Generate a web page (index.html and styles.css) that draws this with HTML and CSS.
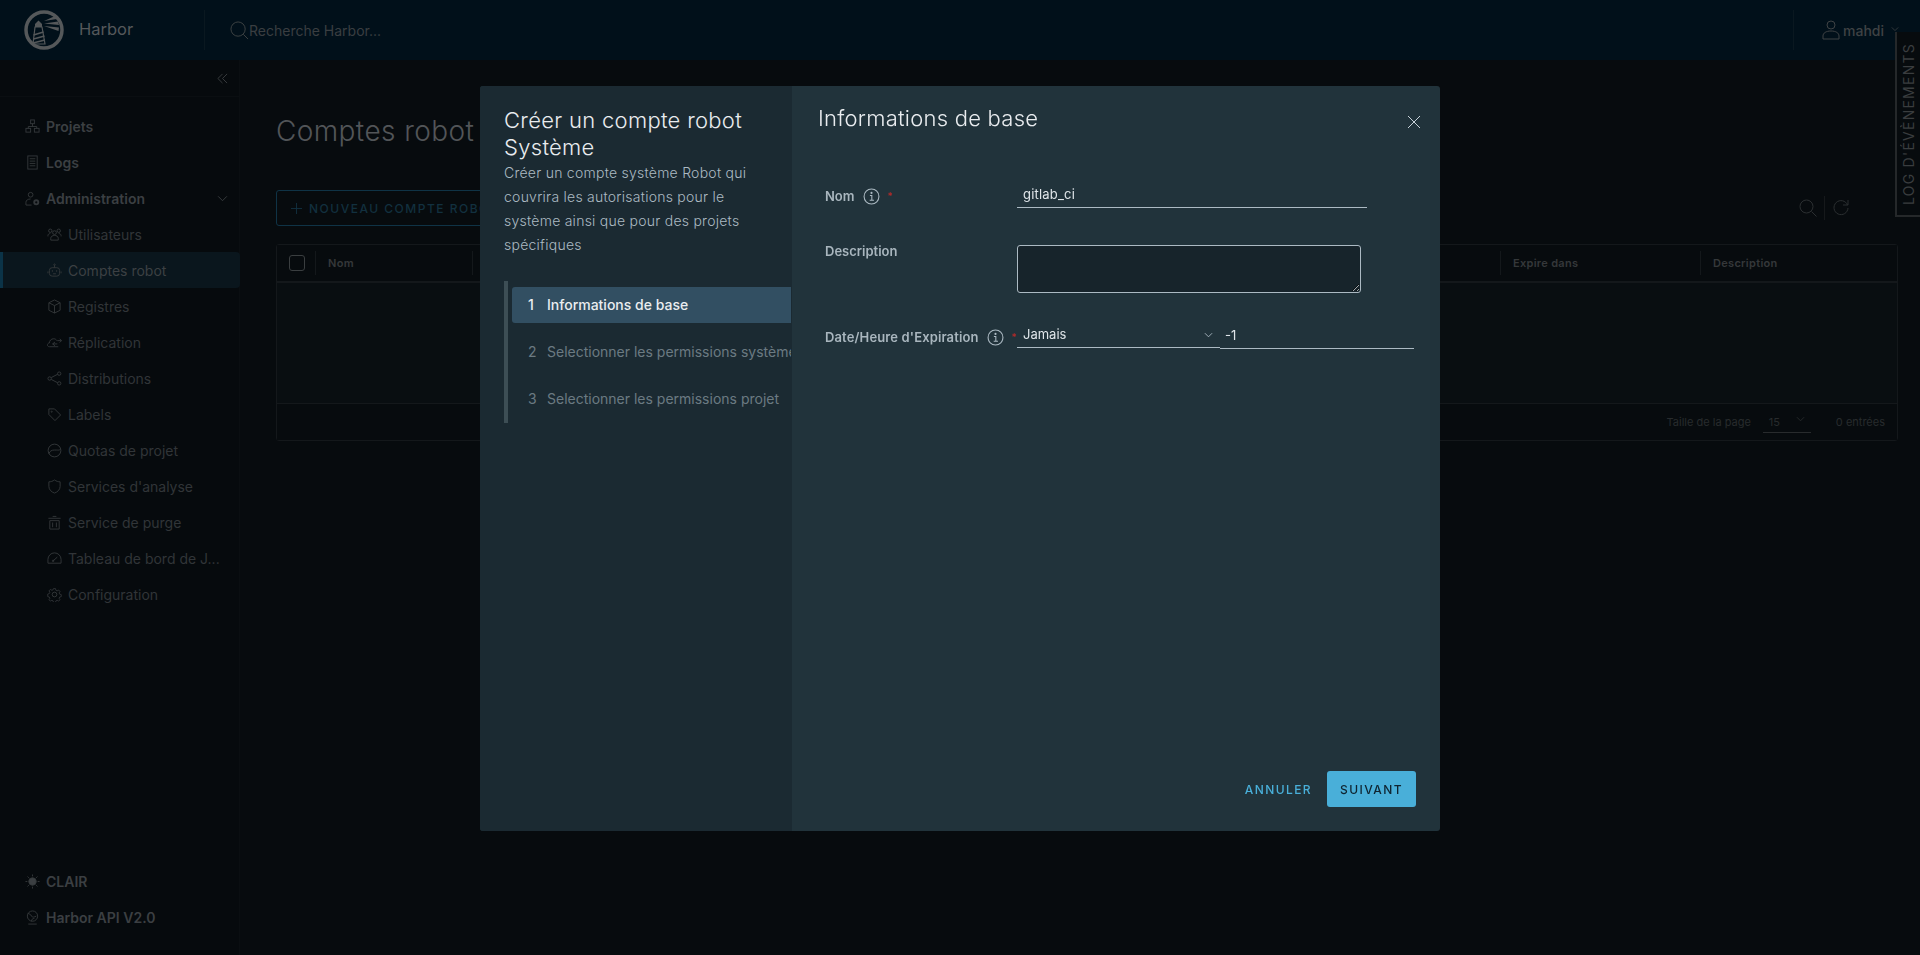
FILE: index.html
```html
<!DOCTYPE html>
<html lang="fr">
<head>
    <meta charset="UTF-8">
    <title>Harbor</title>
    <link rel="stylesheet" href="styles.css">
</head>
<body>
    <!-- Barre du haut -->
    <header class="top-bar">
        <div class="brand">
            <svg class="logo" viewBox="0 0 40 40">
                <circle cx="20" cy="20" r="18" fill="none" stroke="#55585a" stroke-width="3.5"/>
                <path d="M11 14l3.500-3.500 3.500 3.500v3h-7z" fill="#55585a"/>
                <path d="M11 17h7l3 17h-12z" fill="none" stroke="#55585a" stroke-width="1.200"/>
                <path d="M9.500 25l10-3M9.500 29l11-3M9 33l12-3" stroke="#55585a" stroke-width="1.500"/>
                <path d="M20 11l11-5 2 3zM20 13.500l14-2 1 3.500zM20 16l15 1.500-.5 3.500z" fill="#55585a"/>
            </svg>
            <span class="brand-name">Harbor</span>
        </div>
        <div class="search">
            <svg class="search-icon" viewBox="0 0 20 20"><circle cx="8.500" cy="8.500" r="7.500"/><path d="M14 14l5 5"/></svg>
            <span>Recherche Harbor...</span>
        </div>
        <div class="user">
            <svg class="user-icon" viewBox="0 0 18 20"><circle cx="9" cy="5" r="4"/><path d="M1 19v-3c0-3 3-5 8-5s8 2 8 5v3z"/></svg>
            <span>mahdi</span>
            <svg class="user-chevron" viewBox="0 0 10 6"><path d="M1 1l4 4 4-4"/></svg>
        </div>
    </header>

    <div class="log-tab"><span>LOG D'ÉVÈNEMENTS</span></div>

    <div class="main">
        <!-- Menu de gauche -->
        <nav class="sidebar">
            <div class="collapse">
                <svg viewBox="0 0 12 12"><path d="M6 1L1 6l5 5M11 1L6 6l5 5"/></svg>
            </div>
            <ul class="menu">
                <li class="menu-item top"><svg class="ico" viewBox="0 0 16 16"><rect x="6" y="1" width="4" height="4"/><rect x="1" y="10" width="5" height="4"/><rect x="10" y="10" width="5" height="4"/><path d="M8 5v3M3.500 10V8h9v2"/></svg>Projets</li>
                <li class="menu-item top"><svg class="ico" viewBox="0 0 16 16"><rect x="3" y="1" width="10" height="14"/><path d="M5 4h6M5 6.500h6M5 9h6M5 11.500h6"/></svg>Logs</li>
                <li class="menu-item top">
                    <svg class="ico" viewBox="0 0 16 16"><circle cx="6" cy="4" r="2.500"/><path d="M1 15v-3c0-2 2-3.500 5-3.500M1 15h6"/><circle cx="12" cy="12" r="2.200" stroke-width="2"/></svg>Administration
                    <svg class="menu-chevron" viewBox="0 0 12 8"><path d="M1 1.500l5 5 5-5"/></svg>
                </li>
                <li class="menu-item sub"><svg class="ico" viewBox="0 0 16 16"><circle cx="8" cy="6" r="2"/><circle cx="3.500" cy="4" r="1.800"/><circle cx="12.500" cy="4" r="1.800"/><path d="M4 14v-2c0-2 2-3 4-3s4 1 4 3v2zM1 10V9c0-1 1-2 2.500-2M15 10V9c0-1-1-2-2.500-2"/></svg>Utilisateurs</li>
                <li class="menu-item sub active"><svg class="ico" viewBox="0 0 16 16"><rect x="2.500" y="5" width="11" height="9" rx="3"/><path d="M8 5V2.500M1 9v2M15 9v2M6.500 11.500h3"/><circle cx="8" cy="1.800" r=".8"/><circle cx="5.700" cy="8.500" r=".4"/><circle cx="10.300" cy="8.500" r=".4"/></svg>Comptes robot</li>
                <li class="menu-item sub"><svg class="ico" viewBox="0 0 16 16"><path d="M8 1l6 3v8l-6 3-6-3V4zM2 4l6 3 6-3M8 7v8"/></svg>Registres</li>
                <li class="menu-item sub"><svg class="ico" viewBox="0 0 16 16"><path d="M12 12.500H2.500C1 12.500 .5 11.500 .5 10.500s.8-2 2-2c.2-2.500 2-4.500 4.500-4.500 1.500 0 2.800.7 3.500 2M6 9.500h5M8.500 7.500l-2.500 2 2.500 2M11 6h4.500M13.500 4l2 2-2 2"/></svg>Réplication</li>
                <li class="menu-item sub"><svg class="ico" viewBox="0 0 16 16"><circle cx="2.800" cy="8" r="1.800"/><circle cx="13" cy="2.800" r="1.800"/><circle cx="13" cy="13.200" r="1.800"/><path d="M4.500 7l6.800-3.500M4.500 9l6.800 3.500"/></svg>Distributions</li>
                <li class="menu-item sub"><svg class="ico" viewBox="0 0 16 16"><path d="M2 2h6l6.500 6.500-6 6L2 8z"/><circle cx="5" cy="5" r=".6"/></svg>Labels</li>
                <li class="menu-item sub"><svg class="ico" viewBox="0 0 16 16"><circle cx="8" cy="8" r="6.800"/><path d="M2 11.500C3 8.500 5 7.500 8 7.500h2c2 0 3 .5 4.500-1"/></svg>Quotas de projet</li>
                <li class="menu-item sub"><svg class="ico" viewBox="0 0 16 16"><path d="M8 1c2 1.500 4 2 6 2v5c0 3.500-3 6-6 7-3-1-6-3.500-6-7V3c2 0 4-.5 6-2z"/></svg>Services d'analyse</li>
                <li class="menu-item sub"><svg class="ico" viewBox="0 0 16 16"><path d="M1.500 3.500h13M3 6h10v9H3zM6 1.500h4M6 8v5M10 8v5"/></svg>Service de purge</li>
                <li class="menu-item sub"><svg class="ico" viewBox="0 0 16 16"><path d="M1 13V9a7 7 0 0 1 14 0v4zM6.500 10.500L11 6.500"/><circle cx="6.500" cy="10.500" r=".8"/></svg>Tableau de bord de J...</li>
                <li class="menu-item sub"><svg class="ico" viewBox="0 0 16 16"><circle cx="8" cy="8" r="2.500"/><path d="M6.800 1h2.400l.4 2 1.500.7 1.800-1 1.600 1.700-1 1.700.6 1.500 1.900.5v2.400l-1.900.5-.6 1.500 1 1.700-1.600 1.700-1.800-1-1.500.7-.4 2H6.800l-.4-2-1.500-.7-1.800 1-1.600-1.700 1-1.700-.6-1.500-1.900-.5V7.400l1.900-.5.6-1.500-1-1.700 1.600-1.700 1.800 1 1.500-.7z" transform="translate(.8 .8) scale(.9)"/></svg>Configuration</li>
            </ul>
            <ul class="menu menu-bottom">
                <li class="menu-item top"><svg class="ico" viewBox="0 0 16 16"><circle cx="8" cy="8" r="4" fill="#3b3f42"/><path d="M8 .500v2M8 13.500v2M.500 8h2M13.500 8h2M2.700 2.700l1.400 1.400M11.900 11.900l1.400 1.400M2.700 13.300l1.400-1.400M11.900 4.100l1.400-1.400"/></svg>CLAIR</li>
                <li class="menu-item top"><svg class="ico" viewBox="0 0 16 16"><circle cx="8" cy="6.500" r="5.500"/><path d="M3 3.500c2 1 3 1 4 3s3 1 5 0M7 12c0-2 1-3 3-3M3.500 15h9"/></svg>Harbor API V2.0</li>
            </ul>
        </nav>

        <!-- Contenu derrière la fenêtre -->
        <section class="content">
            <h1 class="page-title">Comptes robot</h1>
            <div class="toolbar">
                <button class="new-btn"><svg viewBox="0 0 12 12"><path d="M6 0v12M0 6h12"/></svg>NOUVEAU COMPTE ROBOT</button>
                <div class="tools">
                    <svg viewBox="0 0 18 18"><circle cx="7.500" cy="7.500" r="6.500"/><path d="M12.500 12.500l5 5"/></svg>
                    <span class="tools-sep"></span>
                    <svg viewBox="0 0 18 18"><path d="M15.500 6A7 7 0 1 0 16 9M16 1v5h-5"/></svg>
                </div>
            </div>
            <div class="table">
                <div class="table-head">
                    <div class="cell cell-check"><span class="checkbox"></span></div>
                    <div class="cell cell-name">Nom</div>
                    <div class="cell cell-rest"></div>
                    <div class="cell cell-expire">Expire dans</div>
                    <div class="cell cell-desc">Description</div>
                </div>
                <div class="table-body"></div>
                <div class="table-foot">
                    <span>Taille de la page</span>
                    <span class="page-size">15<svg viewBox="0 0 10 6"><path d="M1 1l4 4 4-4"/></svg></span>
                    <span class="entries">0 entrées</span>
                </div>
            </div>
        </section>
    </div>

    <!-- Fenêtre de création -->
    <div class="overlay">
        <div class="wizard">
            <aside class="wizard-nav">
                <h2 class="wizard-title">Créer un compte robot Système</h2>
                <p class="wizard-desc">Créer un compte système Robot qui couvrira les autorisations pour le système ainsi que pour des projets spécifiques</p>
                <ol class="steps">
                    <li class="step current"><span class="step-num">1</span>Informations de base</li>
                    <li class="step"><span class="step-num">2</span>Selectionner les permissions système</li>
                    <li class="step"><span class="step-num">3</span>Selectionner les permissions projet</li>
                </ol>
            </aside>
            <div class="wizard-pane">
                <div class="pane-head">
                    <h3 class="pane-title">Informations de base</h3>
                    <svg class="close" viewBox="0 0 14 14"><path d="M1 1l12 12M13 1L1 13"/></svg>
                </div>
                <form class="form">
                    <div class="row row-name">
                        <div class="label">Nom<svg class="info" viewBox="0 0 16 16"><circle cx="8" cy="8" r="7"/><path d="M6.500 7H8.300v4.500M6.300 11.500h4"/><circle cx="8" cy="4.600" r=".5"/></svg><span class="star">*</span></div>
                        <div class="field field-name">gitlab_ci</div>
                    </div>
                    <div class="row row-desc">
                        <div class="label label-desc">Description</div>
                        <textarea class="area"></textarea>
                    </div>
                    <div class="row row-date">
                        <div class="label label-date">Date/Heure d'Expiration<svg class="info" viewBox="0 0 16 16"><circle cx="8" cy="8" r="7"/><path d="M6.500 7H8.300v4.500M6.300 11.500h4"/><circle cx="8" cy="4.600" r=".5"/></svg><span class="star">*</span></div>
                        <div class="field field-select">Jamais<svg viewBox="0 0 10 6"><path d="M1 1l4 4 4-4"/></svg></div>
                        <div class="field field-num">-1</div>
                    </div>
                </form>
                <div class="pane-foot">
                    <button type="button" class="btn-flat">ANNULER</button>
                    <button type="button" class="btn-primary">SUIVANT</button>
                </div>
            </div>
        </div>
    </div>
</body>
</html>
```

FILE: styles.css
```css
* {
    box-sizing: border-box;
}

html, body {
    height: 100%;
}

body {
    margin: 0;
    font-family: 'Inter', 'Liberation Sans', sans-serif;
    background-color: #070b0e;
    color: #3a3d40;
    display: flex;
    flex-direction: column;
    overflow: hidden;
}

ul, ol {
    list-style: none;
    margin: 0;
    padding: 0;
}

svg {
    fill: none;
    flex: none;
}

/* Barre du haut */
.top-bar {
    height: 60px;
    flex: none;
    background-color: #01101a;
    display: flex;
    align-items: center;
}

.brand {
    width: 205px;
    height: 40px;
    padding-left: 24px;
    display: flex;
    align-items: center;
    border-right: 1px solid #0a1820;
}

.logo {
    width: 40px;
    height: 40px;
}

.brand-name {
    margin-left: 15px;
    margin-top: -2px;
    font-size: 16.500px;
    color: #55585a;
}

.search {
    margin-left: 25px;
    display: flex;
    align-items: center;
    font-size: 14px;
    color: #3a3e41;
}

.search-icon {
    width: 19px;
    height: 19px;
    stroke: #3f4345;
    stroke-width: 1;
}

.user {
    margin-left: auto;
    width: 127px;
    height: 40px;
    padding-left: 28px;
    border-left: 1px solid #0a1820;
    display: flex;
    align-items: center;
    font-size: 14px;
    font-weight: 500;
    color: #3f4244;
}

.user-icon {
    width: 18px;
    height: 20px;
    margin-right: 3px;
    stroke: #3f4244;
}

.user-chevron {
    width: 8px;
    height: 6px;
    margin-left: 7px;
    margin-top: -3px;
    stroke: #3f4244;
}

.log-tab {
    position: absolute;
    top: 32px;
    right: 0;
    width: 25px;
    height: 185px;
    background-color: #070b0e;
    border-left: 2px solid #25282a;
    border-bottom: 2px solid #25282a;
    display: flex;
    align-items: center;
    justify-content: center;
}

.log-tab span {
    writing-mode: vertical-rl;
    transform: rotate(180deg);
    font-size: 14px;
    letter-spacing: 1.250px;
    white-space: nowrap;
    color: #3a3d3f;
}

.main {
    flex: 1;
    display: flex;
    min-height: 0;
}

/* Menu de gauche */
.sidebar {
    width: 240px;
    flex: none;
    background-color: #060a0d;
    display: flex;
    flex-direction: column;
    padding-bottom: 20px;
    border-right: 1px solid #0a0e11;
}

.collapse {
    height: 37px;
    padding-right: 11px;
    display: flex;
    align-items: center;
    justify-content: flex-end;
    border-bottom: 1px solid #0a0e11;
}

.collapse svg {
    width: 11px;
    height: 11px;
    stroke: #3c4042;
}

.menu {
    padding-top: 11px;
}

.menu-bottom {
    margin-top: auto;
    padding-top: 0;
}

.menu-item {
    height: 36px;
    display: flex;
    align-items: center;
    font-size: 14px;
    white-space: nowrap;
}

.menu-item .ico {
    width: 15px;
    height: 15px;
    stroke: #33373a;
    stroke-width: 1;
}

.menu-item.top {
    padding-left: 25px;
    font-weight: 600;
    color: #3b3f42;
}

.menu-item.top .ico {
    margin-right: 6px;
}

.menu-item.sub {
    padding-left: 47px;
    color: #313538;
}

.menu-item.sub .ico {
    margin-right: 6px;
}

.menu-item.active {
    background-color: #0a161d;
    border-left: 3px solid #0b3347;
    padding-left: 44px;
    border-radius: 0 4px 4px 0;
    margin-right: -1px;
    color: #3c4043;
}

.menu-chevron {
    width: 11px;
    height: 7px;
    margin-left: auto;
    margin-right: 11px;
    stroke: #3c4042;
}

/* Contenu derrière */
.content {
    flex: 1;
    padding: 0 22px 0 36px;
}

.page-title {
    margin: 52px 0 0;
    font-size: 28px;
    line-height: 38px;
    font-weight: 300;
    letter-spacing: .4px;
    color: #525558;
}

.toolbar {
    margin-top: 40px;
    height: 36px;
    display: flex;
    align-items: center;
    justify-content: space-between;
}

.new-btn {
    height: 36px;
    width: 260px;
    padding: 0 14px;
    background: none;
    border: 1px solid #0f3346;
    border-radius: 3px;
    display: flex;
    align-items: center;
    font-family: inherit;
    font-size: 12px;
    font-weight: 500;
    letter-spacing: 1.500px;
    color: #12303f;
    white-space: nowrap;
}

.new-btn svg {
    width: 11px;
    height: 11px;
    margin-right: 7px;
    stroke: #12303f;
}

.tools {
    display: flex;
    align-items: center;
    margin-right: 48px;
}

.tools svg {
    width: 18px;
    height: 18px;
    stroke: #2b2f31;
}

.tools-sep {
    width: 1px;
    height: 24px;
    margin: 0 7px;
    background-color: #16191b;
}

.table {
    margin-top: 18px;
    border: 1px solid #14181b;
    border-radius: 3px;
    height: 197px;
    display: flex;
    flex-direction: column;
    background-color: #090e11;
}

.table-head {
    height: 38px;
    flex: none;
    background-color: #070b0e;
    border-bottom: 2px solid #14181b;
    display: flex;
    align-items: center;
    font-size: 11px;
    font-weight: 600;
    letter-spacing: .3px;
    color: #35383a;
}

.cell {
    height: 24px;
    display: flex;
    align-items: center;
    padding-left: 12px;
    border-left: 1px solid #14181b;
}

.cell-check {
    width: 38px;
    border-left: 0;
}

.checkbox {
    width: 16px;
    height: 16px;
    border: 1px solid #3a3e40;
    border-radius: 3px;
}

.cell-name {
    width: 157px;
}

.cell-rest {
    flex: 1;
}

.cell-expire {
    width: 200px;
}

.cell-desc {
    width: 197px;
}

.table-body {
    flex: 1;
}

.table-foot {
    height: 37px;
    flex: none;
    border-top: 1px solid #14181b;
    padding-right: 12px;
    display: flex;
    align-items: center;
    justify-content: flex-end;
    font-size: 11px;
    color: #282b2d;
    background-color: #070b0e;
}

.page-size {
    width: 48px;
    height: 22px;
    margin-left: 12px;
    padding: 4px 6px 0;
    border-bottom: 1px solid #282b2d;
    display: flex;
    justify-content: space-between;
}

.page-size svg {
    width: 9px;
    height: 6px;
    margin-top: 1px;
    stroke: #282b2d;
}

.entries {
    margin-left: 25px;
}

/* Fenêtre */
.overlay {
    position: fixed;
    inset: 0;
    padding-top: 86px;
    display: flex;
    justify-content: center;
    align-items: flex-start;
}

.wizard {
    width: 960px;
    height: 745px;
    display: flex;
    border-radius: 3px;
    overflow: hidden;
    background-color: #21333b;
}

.wizard-nav {
    width: 312px;
    flex: none;
    padding: 21px 0 0 24px;
    background-color: #1b2a32;
    border-right: 1px solid #1b2a32;
}

.wizard-title {
    margin: 0;
    font-size: 22px;
    line-height: 27px;
    font-weight: 300;
    letter-spacing: .3px;
    color: #e9ecef;
}

.wizard-desc {
    margin: 0;
    padding-right: 30px;
    font-size: 14px;
    line-height: 24px;
    font-weight: 300;
    letter-spacing: .25px;
    color: #acbac3;
}

.steps {
    margin-top: 24px;
    height: 142px;
    padding: 6px 0 0 4px;
    border-left: 4px solid #3d4e55;
    display: flex;
    flex-direction: column;
    gap: 11px;
}

.step {
    height: 36px;
    padding-left: 16px;
    padding-bottom: 2px;
    display: flex;
    align-items: center;
    font-size: 14px;
    color: #6b7a82;
    white-space: nowrap;
    overflow: hidden;
    border-radius: 3px 0 0 3px;
}

.step.current {
    background-color: #324f62;
    color: #eaedf0;
    font-weight: 500;
}

.step-num {
    width: 19px;
    flex: none;
}

.wizard-pane {
    flex: 1;
    display: flex;
    flex-direction: column;
}

.pane-head {
    padding: 16px 19px 0 26px;
    display: flex;
    justify-content: space-between;
}

.pane-title {
    margin: 0;
    font-size: 22px;
    line-height: 32px;
    font-weight: 300;
    letter-spacing: .25px;
    color: #e9ecef;
}

.close {
    width: 14px;
    height: 14px;
    margin-top: 13px;
    stroke: #c8d3da;
}

.form {
    padding: 50px 0 0 33px;
}

.row {
    display: flex;
}

.label {
    width: 192px;
    flex: none;
    height: 24px;
    display: flex;
    align-items: center;
    font-size: 13px;
    font-weight: 600;
    color: #a9b6be;
    white-space: nowrap;
}

.label-desc {
    height: 11px;
}

.info {
    width: 17px;
    height: 17px;
    margin-left: 8px;
    stroke: #acbac3;
    stroke-width: 1;
}

.star {
    margin-left: 8px;
    color: #b02a2a;
    font-size: 10px;
}

.label-date {
    margin-top: 1px;
    letter-spacing: .13px;
}

.field {
    height: 24px;
    padding: 0 6px;
    font-size: 13px;
    line-height: 21px;
    color: #dfe5e9;
    border-bottom: 1px solid #acbac3;
}

.field-name {
    width: 350px;
    letter-spacing: .2px;
}

.row-desc {
    margin-top: 37px;
}

.area {
    display: block;
    width: 344px;
    height: 48px;
    margin: 0;
    background-color: #17242b;
    border: 1px solid #acbac3;
    border-radius: 3px;
    outline: none;
}

.row-date {
    margin-top: 31px;
}

.field-select {
    width: 203px;
    display: flex;
    align-items: center;
    justify-content: space-between;
    padding-right: 7px;
    padding-bottom: 2px;
}

.field-select svg {
    width: 9px;
    height: 6px;
    stroke: #acbac3;
}

.field-num {
    width: 194px;
    margin-top: 1px;
    padding-left: 5px;
}

.pane-foot {
    margin-top: auto;
    padding: 0 24px 24px 0;
    display: flex;
    justify-content: flex-end;
    align-items: center;
    gap: 15px;
}

.btn-flat, .btn-primary {
    font-family: inherit;
    font-size: 12px;
    font-weight: 500;
    letter-spacing: 1.400px;
    border: 0;
    padding: 0;
}

.btn-flat {
    background: none;
    color: #49afd9;
}

.btn-primary {
    width: 89px;
    height: 36px;
    background-color: #49afd9;
    color: #0f2430;
    border-radius: 3px;
}
```
